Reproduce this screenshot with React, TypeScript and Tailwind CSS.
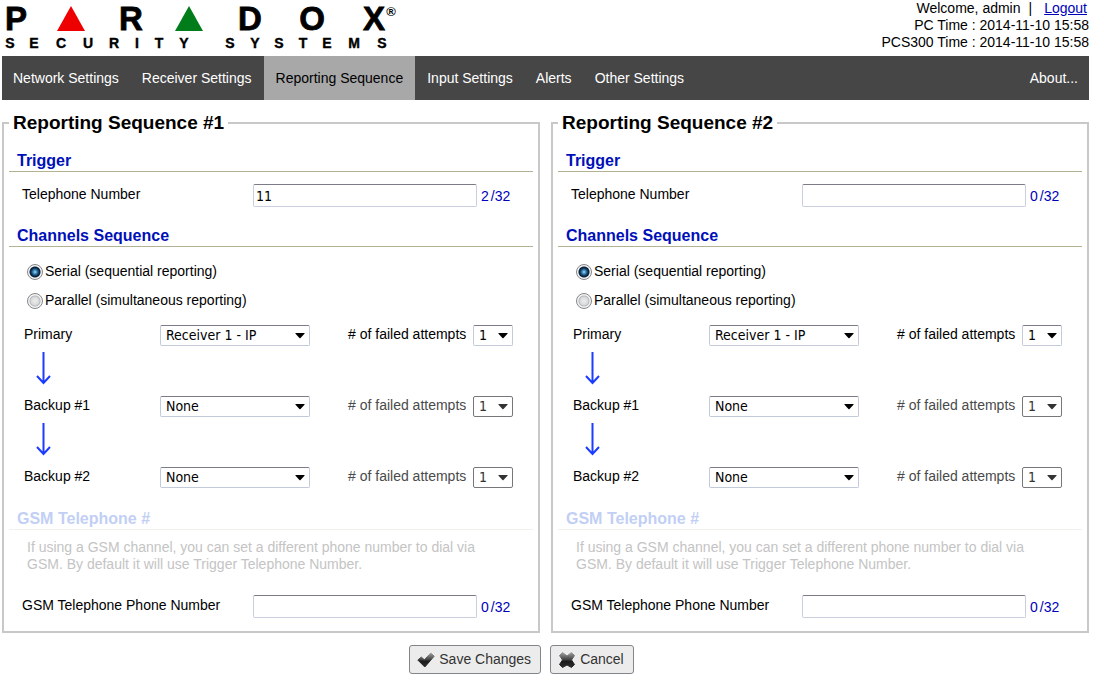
import { useState } from 'react'
import clsx from 'clsx'

interface Channel {
  name: string
  receiver: string
  disabled: boolean
}

interface Sequence {
  id: number
  phone: string
}

const MAX_DIGITS = 32

const NAV_ITEMS = [
  'Network Settings',
  'Receiver Settings',
  'Reporting Sequence',
  'Input Settings',
  'Alerts',
  'Other Settings',
]

const CHANNELS: Channel[] = [
  { name: 'Primary', receiver: 'Receiver 1 - IP', disabled: false },
  { name: 'Backup #1', receiver: 'None', disabled: true },
  { name: 'Backup #2', receiver: 'None', disabled: true },
]

const SEQUENCES: Sequence[] = [
  { id: 1, phone: '11' },
  { id: 2, phone: '' },
]

const LOGO_TOP: [string, number][] = [
  ['P', 16],
  ['R', 131],
  ['D', 250],
  ['O', 312],
  ['X', 374],
]

const LOGO_BOTTOM: [string, number][] = [
  ['S', 10],
  ['E', 34],
  ['C', 61],
  ['U', 88],
  ['R', 114],
  ['I', 137],
  ['T', 159],
  ['Y', 184],
  ['S', 230],
  ['Y', 255],
  ['S', 279],
  ['T', 303],
  ['E', 327],
  ['M', 354],
  ['S', 382],
]

function Logo() {
  return (
    <svg width="400" height="56" viewBox="0 0 400 56" role="img" aria-label="Paradox Security Systems">
      <g fontFamily="'Liberation Sans', Arial, sans-serif" fontWeight="700" textAnchor="middle">
        {LOGO_TOP.map(([letter, x]) => (
          <text key={x} x={x} y="30" fontSize="33" stroke="black" strokeWidth="0.8">
            {letter}
          </text>
        ))}
        {LOGO_BOTTOM.map(([letter, x]) => (
          <text key={x} x={x} y="48" fontSize="14" stroke="black" strokeWidth="0.4">
            {letter}
          </text>
        ))}
        <text x="391" y="16" fontSize="13">
          ®
        </text>
      </g>
      <path d="M71 6 85 31H57Z" fill="#ee0000" />
      <path d="M189 6 203 31H175Z" fill="#007d1a" />
    </svg>
  )
}

function Header() {
  return (
    <header className="flex h-14 items-start justify-between">
      <div className="-ml-0.5">
        <Logo />
      </div>
      <div className="text-right leading-[17px]">
        <div className="pr-0.5">
          Welcome, admin<span className="mx-2">|</span>
          <a href="#logout" className="ml-1 text-[#0000bb] underline">
            Logout
          </a>
        </div>
        <div>PC Time : 2014-11-10 15:58</div>
        <div>PCS300 Time : 2014-11-10 15:58</div>
      </div>
    </header>
  )
}

function Nav() {
  return (
    <nav className="flex h-11 gap-px bg-[#464646] text-white">
      {NAV_ITEMS.map(item => (
        <a
          key={item}
          href="#"
          className={clsx(
            'flex items-center whitespace-nowrap',
            item === 'Reporting Sequence' ? 'bg-[#a8a8a8] px-3 text-black' : 'px-[11px]'
          )}
        >
          {item}
        </a>
      ))}
      <a href="#" className="ml-auto flex items-center px-[11px]">
        About...
      </a>
    </nav>
  )
}

function SectionTitle({ children, className }: { children: string; className?: string }) {
  return (
    <h3
      className={clsx(
        'border-b pl-2 text-base leading-5 font-bold',
        className ?? 'border-b-[#b3b394] text-[#0010b8]'
      )}
    >
      {children}
    </h3>
  )
}

function PhoneField({ id, label, initial }: { id: string; label: string; initial: string }) {
  const [value, setValue] = useState(initial)

  return (
    <div className="flex items-start pl-[13px]">
      <label htmlFor={id} className="w-[231px] leading-5">
        {label}
      </label>
      <input
        id={id}
        type="text"
        maxLength={MAX_DIGITS}
        value={value}
        onChange={e => setValue(e.target.value)}
        className="h-[23px] w-56 rounded-xs border border-[#c9cfdf] border-t-[#7c7c88] bg-white px-0.5 font-['DejaVu_Sans_Condensed','DejaVu_Sans',sans-serif]"
      />
      <span className="ml-1 flex gap-0.5 leading-6 text-[#0000bb]">
        <span>{value.length}</span>
        <span>/{MAX_DIGITS}</span>
      </span>
    </div>
  )
}

interface DropdownProps {
  id: string
  options: string[]
  initial: string
  width: string
  disabled?: boolean
}

function Dropdown({ id, options, initial, width, disabled }: DropdownProps) {
  return (
    <div className={clsx('relative', width)}>
      <select
        id={id}
        defaultValue={initial}
        disabled={disabled}
        className={clsx(
          "block h-[21px] w-full appearance-none rounded-xs border bg-white pl-[5px] font-['DejaVu_Sans_Condensed','DejaVu_Sans',sans-serif] text-[14px] leading-[19px] opacity-100",
          disabled
            ? 'border-[#77777b] text-[#333]'
            : 'border-[#c3cbdb] border-t-[#7c7c88] text-black'
        )}
      >
        {options.map(option => (
          <option key={option}>{option}</option>
        ))}
      </select>
      <svg
        className={clsx(
          'pointer-events-none absolute top-2 right-[5px]',
          disabled ? 'fill-[#333]' : 'fill-black'
        )}
        width="10"
        height="6"
        viewBox="0 0 10 6"
        aria-hidden="true"
      >
        <path d="M0.500 0h9v0.700L5.300 5.200h-0.600L0.500 0.700Z" />
      </svg>
    </div>
  )
}

function RadioOption({ name, label, checked }: { name: string; label: string; checked?: boolean }) {
  return (
    <label className="flex h-[29px] items-center gap-0.5">
      <input
        type="radio"
        name={name}
        defaultChecked={checked}
        className="size-4 appearance-none rounded-full border border-[#858688] bg-[radial-gradient(circle_at_7px_7px,#ececec_0px,#d8dadc_4px,#b4b7ba_5px,#f4f4f4_6px)] checked:bg-[radial-gradient(circle_at_7px_7px,#a6dcf5_0px,#3583b5_2px,#0c2f55_4px,#0a1c30_5px,#f4f4f4_6px)]"
      />
      {label}
    </label>
  )
}

function DownArrow() {
  return (
    <div className="h-[50px] pt-1.5 pl-3">
      <svg width="16" height="33" viewBox="0 0 16 33" fill="none" stroke="#1c3cff" strokeWidth="2">
        <path d="M7.500 0V31M1 24 7.500 31 14 24" />
      </svg>
    </div>
  )
}

function ChannelRow({ channel, prefix }: { channel: Channel; prefix: string }) {
  return (
    <div className="flex items-start">
      <label htmlFor={`${prefix}-receiver`} className="w-[136px] leading-[18px]">
        {channel.name}
      </label>
      <Dropdown
        id={`${prefix}-receiver`}
        options={['None', 'Receiver 1 - IP']}
        initial={channel.receiver}
        width="w-[150px]"
      />
      <label
        htmlFor={`${prefix}-attempts`}
        className={clsx('ml-[38px] w-[125px] leading-[18px]', channel.disabled && 'text-[#4a4a4a]')}
      >
        # of failed attempts
      </label>
      <Dropdown
        id={`${prefix}-attempts`}
        options={['1', '2', '3']}
        initial="1"
        width="w-10"
        disabled={channel.disabled}
      />
    </div>
  )
}

function SequencePanel({ sequence }: { sequence: Sequence }) {
  const prefix = `seq${sequence.id}`

  return (
    <fieldset className="min-w-0 border-2 border-[#c8c8c8] px-[5px] pb-3">
      <legend className="px-1 text-[19px] leading-6 font-bold">
        Reporting Sequence #{sequence.id}
      </legend>

      <div className="mt-4">
        <SectionTitle>Trigger</SectionTitle>
      </div>
      <div className="mt-3">
        <PhoneField id={`${prefix}-phone`} label="Telephone Number" initial={sequence.phone} />
      </div>

      <div className="mt-[18px]">
        <SectionTitle>Channels Sequence</SectionTitle>
      </div>
      <div className="mt-2.5 pl-[18px]">
        <RadioOption name={`${prefix}-mode`} label="Serial (sequential reporting)" checked />
        <RadioOption name={`${prefix}-mode`} label="Parallel (simultaneous reporting)" />
      </div>
      <div className="mt-2.5 pl-[15px]">
        {CHANNELS.map((channel, i) => (
          <div key={channel.name}>
            {i > 0 && <DownArrow />}
            <ChannelRow channel={channel} prefix={`${prefix}-ch${i}`} />
          </div>
        ))}
      </div>

      <div className="mt-[21px]">
        <SectionTitle className="border-b-[#f0f0ec] text-[#c2cff5]">GSM Telephone #</SectionTitle>
      </div>
      <p className="mt-[9px] max-w-[490px] pl-[18px] leading-[17px] text-[#c4c4c4]">
        If using a GSM channel, you can set a different phone number to dial via GSM. By default it
        will use Trigger Telephone Number.
      </p>
      <div className="mt-[22px]">
        <PhoneField id={`${prefix}-gsm`} label="GSM Telephone Phone Number" initial="" />
      </div>
    </fieldset>
  )
}

// Shared dark gloss for the button icons
function Gloss({ id }: { id: string }) {
  return (
    <linearGradient id={id} x1="0" y1="0" x2="0" y2="1">
      <stop offset="0" stopColor="#a0a0a0" />
      <stop offset="0.45" stopColor="#484848" />
      <stop offset="0.6" stopColor="#1c1c1c" />
      <stop offset="1" stopColor="#2e2e2e" />
    </linearGradient>
  )
}

function CheckIcon() {
  return (
    <svg width="18" height="16" viewBox="0 0 18 16" aria-hidden="true">
      <Gloss id="gloss-check" />
      <path
        d="M.800 8 4.300 5 7.300 7.800 13.800 1 17.200 4.200 7.800 15Z"
        fill="url(#gloss-check)"
        stroke="url(#gloss-check)"
        strokeLinejoin="round"
      />
    </svg>
  )
}

function CrossIcon() {
  return (
    <svg width="18" height="18" viewBox="0 0 18 18" aria-hidden="true">
      <Gloss id="gloss-cross" />
      <path
        d="M1.500 4.500 4.500 1.500 9 5 13.500 1.500 16.500 4.500 13.500 9 16.500 13.500 13.500 16.500 9 14 4.500 16.500 1.500 13.500 4.500 9Z"
        fill="url(#gloss-cross)"
        stroke="url(#gloss-cross)"
        strokeLinejoin="round"
      />
    </svg>
  )
}

const BUTTON_CLASS =
  'flex h-[29px] items-center gap-1 rounded-[3px] border border-[#82858a] bg-[#ececec] pr-[9px] pl-[7px] text-[#333]'

function App() {
  return (
    <div className="bg-white pr-[15px] pl-0.5 font-['Liberation_Sans',Arial,sans-serif] text-[14px] text-black">
      <Header />
      <Nav />
      <form onSubmit={e => e.preventDefault()}>
        <div className="mt-[11px] grid grid-cols-2 gap-[11px]">
          {SEQUENCES.map(sequence => (
            <SequencePanel key={sequence.id} sequence={sequence} />
          ))}
        </div>
        <div className="mt-3 flex justify-center gap-[9px] pr-12">
          <button type="submit" className={BUTTON_CLASS}>
            <CheckIcon />
            Save Changes
          </button>
          <button type="button" className={BUTTON_CLASS}>
            <CrossIcon />
            Cancel
          </button>
        </div>
      </form>
    </div>
  )
}

export default App
